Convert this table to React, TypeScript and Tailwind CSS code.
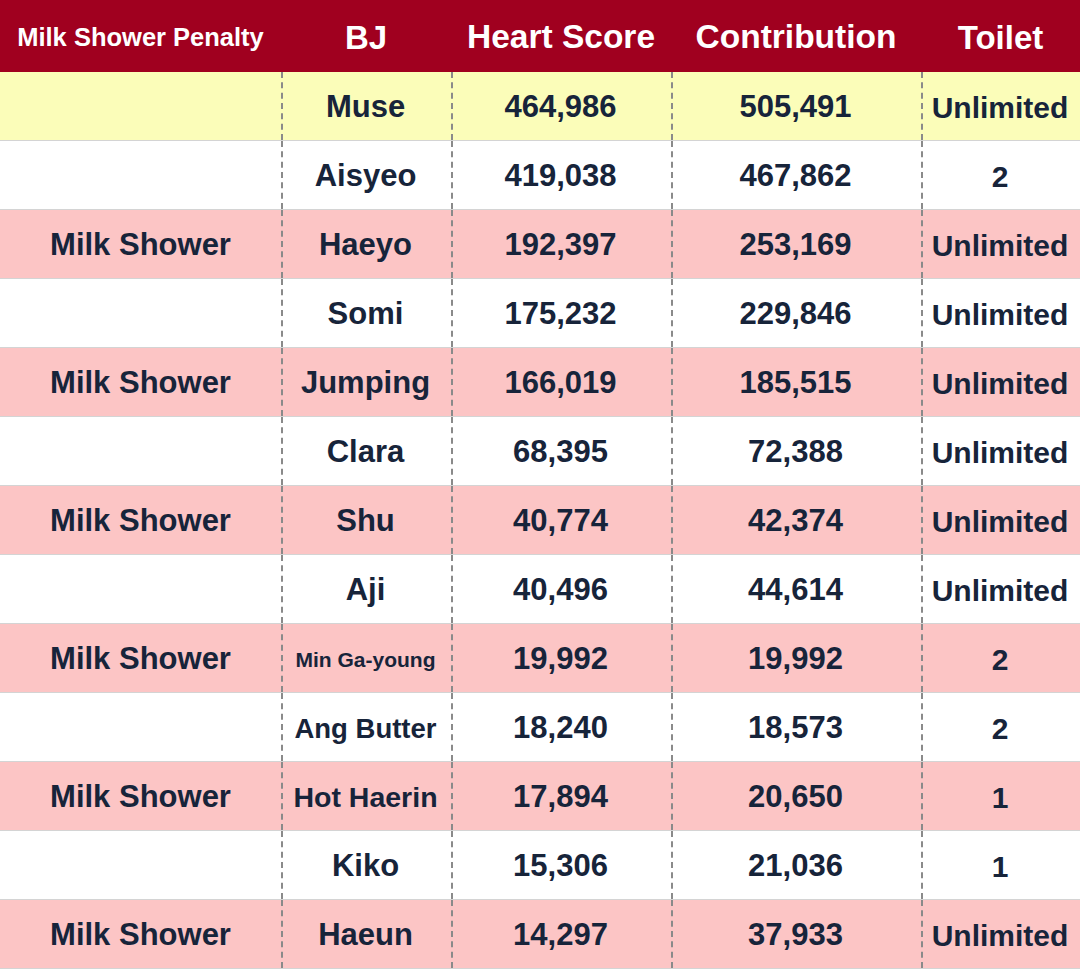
import React from "react";

type Row = { p: boolean; bj: string; bjSize?: string; h: string; c: string; t: string; bg: string };

const rows: Row[] = [
  { p: false, bj: "Muse", h: "464,986", c: "505,491", t: "Unlimited", bg: "bg-[#fbfdb9]" },
  { p: false, bj: "Aisyeo", h: "419,038", c: "467,862", t: "2", bg: "bg-white" },
  { p: true, bj: "Haeyo", h: "192,397", c: "253,169", t: "Unlimited", bg: "bg-[#fcc5c5]" },
  { p: false, bj: "Somi", h: "175,232", c: "229,846", t: "Unlimited", bg: "bg-white" },
  { p: true, bj: "Jumping", h: "166,019", c: "185,515", t: "Unlimited", bg: "bg-[#fcc5c5]" },
  { p: false, bj: "Clara", h: "68,395", c: "72,388", t: "Unlimited", bg: "bg-white" },
  { p: true, bj: "Shu", h: "40,774", c: "42,374", t: "Unlimited", bg: "bg-[#fcc5c5]" },
  { p: false, bj: "Aji", h: "40,496", c: "44,614", t: "Unlimited", bg: "bg-white" },
  { p: true, bj: "Min Ga-young", bjSize: "text-[21px]", h: "19,992", c: "19,992", t: "2", bg: "bg-[#fcc5c5]" },
  { p: false, bj: "Ang Butter", bjSize: "text-[27.5px]", h: "18,240", c: "18,573", t: "2", bg: "bg-white" },
  { p: true, bj: "Hot Haerin", bjSize: "text-[28.5px]", h: "17,894", c: "20,650", t: "1", bg: "bg-[#fcc5c5]" },
  { p: false, bj: "Kiko", h: "15,306", c: "21,036", t: "1", bg: "bg-white" },
  { p: true, bj: "Haeun", h: "14,297", c: "37,933", t: "Unlimited", bg: "bg-[#fcc5c5]" },
];

const cols = "grid grid-cols-[281px_170px_220px_250px_159px]";
const cell = "flex items-center justify-center whitespace-nowrap pt-[3px]";
const dash = "border-l-2 border-dashed border-[#8a8a8a] pr-[3px]";

export default function App() {
  return (
    <div
      className="w-[1080px] h-[969px] overflow-hidden bg-white text-[#17243a] font-bold"
      style={{ fontFamily: '"Liberation Sans", Arial, sans-serif' }}
    >
      <div className={`${cols} h-[72px] bg-[#a0001f] text-white`}>
        <div className={`${cell} text-[25.5px]`}>Milk Shower Penalty</div>
        <div className={`${cell} text-[33px]`}>BJ</div>
        <div className={`${cell} text-[33.5px]`}>Heart Score</div>
        <div className={`${cell} text-[33.5px]`}>Contribution</div>
        <div className={`${cell} text-[33px]`}>Toilet</div>
      </div>
      {rows.map((r, i) => (
        <div key={i} className={`${cols} h-[69px] ${r.bg} border-b border-[#d4d4d4] text-[31px]`}>
          <div className={cell}>{r.p ? "Milk Shower" : ""}</div>
          <div className={`${cell} ${dash} ${r.bjSize ?? ""}`}>{r.bj}</div>
          <div className={`${cell} ${dash}`}>{r.h}</div>
          <div className={`${cell} ${dash}`}>{r.c}</div>
          <div className={`${cell} ${dash} text-[30px]`}>{r.t}</div>
        </div>
      ))}
    </div>
  );
}
